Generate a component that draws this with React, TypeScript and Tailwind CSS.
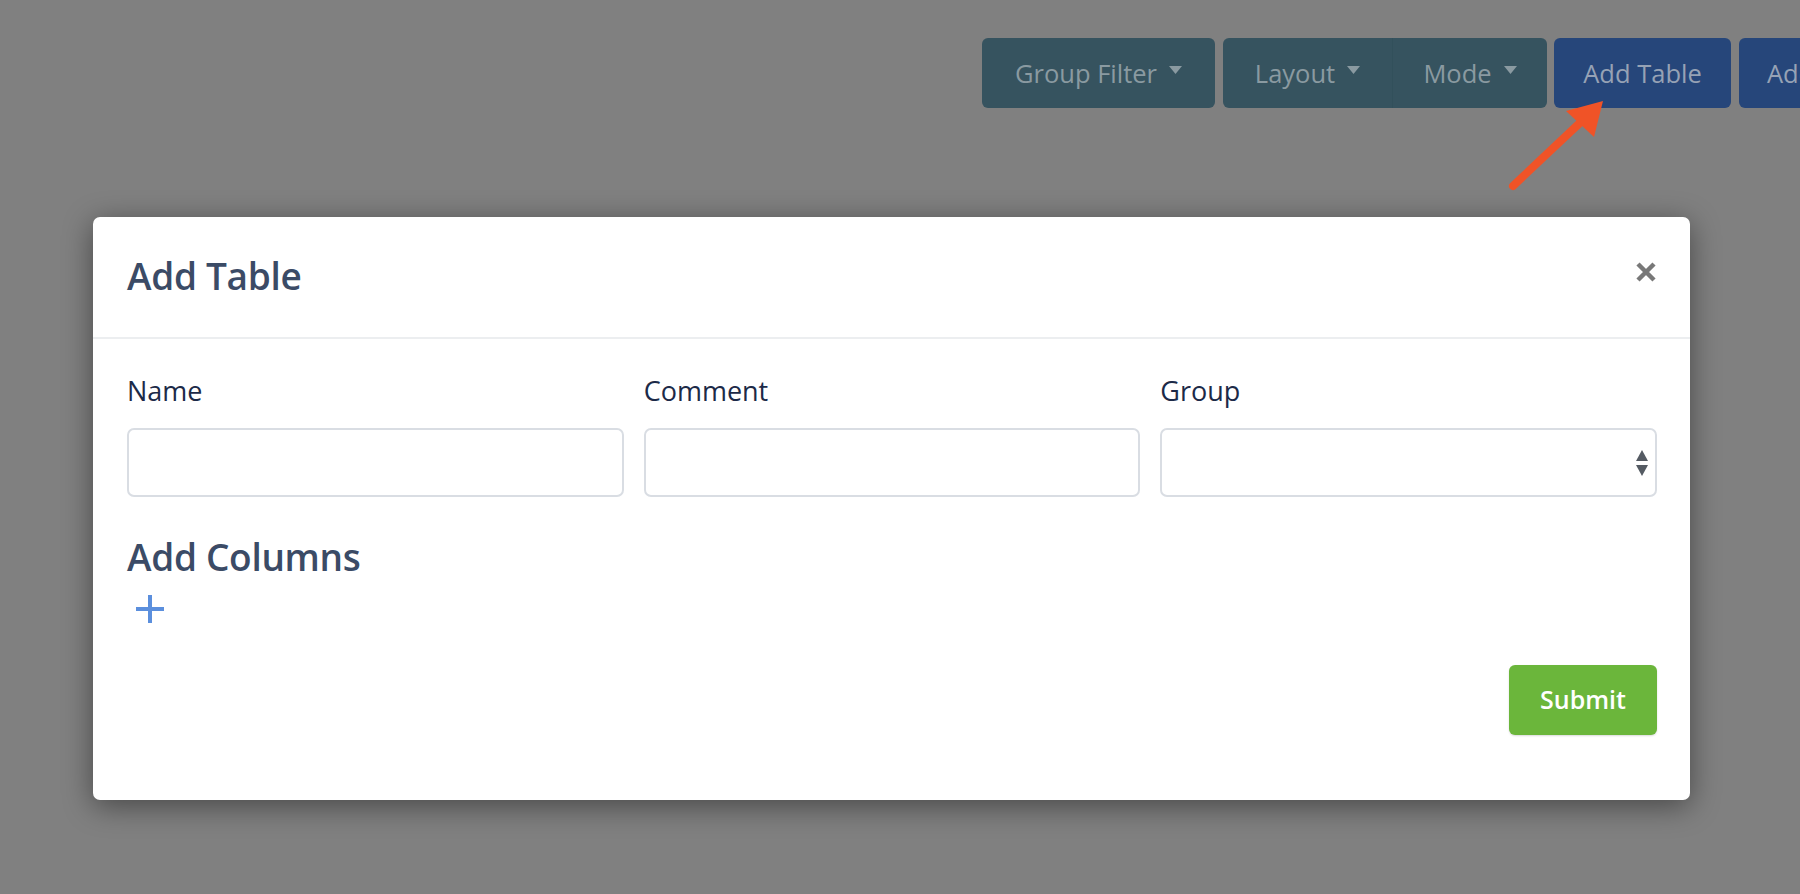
import React from "react";

const Caret = () => (
  <svg className="w-[13px] h-[8px] ml-[12px] mb-[6px]" viewBox="0 0 13 8">
    <path d="M0 0h13L6.5 8z" fill="currentColor" />
  </svg>
);

function TopBar() {
  return (
    <div className="flex h-[108px] pt-[38px] pl-[982px] overflow-hidden whitespace-nowrap" style={{ fontFamily: "'Open Sans', sans-serif" }}>
      <button className="flex items-center justify-center shrink-0 w-[233px] h-[70px] rounded-[6px] bg-[#36535f] text-[#8a9aa1] text-[25.5px]">
        Group Filter
        <Caret />
      </button>
      <div className="flex shrink-0 ml-[8px] h-[70px] rounded-[6px] bg-[#36535f] text-[#8a9aa1] text-[25.5px] overflow-hidden">
        <button className="flex items-center justify-center w-[170px] h-full border-r border-[#32505b]">
          Layout
          <Caret />
        </button>
        <button className="flex items-center justify-center w-[154px] h-full">
          Mode
          <Caret />
        </button>
      </div>
      <button className="flex items-center justify-center shrink-0 ml-[7px] w-[177px] h-[70px] rounded-[6px] bg-[#26467a] text-[#96a2b5] text-[25.5px]">
        Add Table
      </button>
      <button className="flex items-center justify-start shrink-0 ml-[8px] w-[210px] h-[70px] rounded-[6px] bg-[#26467a] text-[#96a2b5] text-[25.5px] pl-[28px]">
        Add Column
      </button>
    </div>
  );
}

function Field({ label, select }: { label: string; select?: boolean }) {
  return (
    <div className="flex flex-col">
      <label className="text-[27px] leading-none h-[27px] text-[#1c2a48]">{label}</label>
      <div className="relative mt-[24px]">
        {select ? (
          <select className="w-full h-[69px] rounded-[7px] border-2 border-[#d9dde3] bg-white appearance-none outline-none" />
        ) : (
          <input className="w-full h-[69px] rounded-[7px] border-2 border-[#d9dde3] bg-white outline-none px-4 text-[24px]" />
        )}
        {select && (
          <svg className="absolute right-[9px] top-[22px] w-[12px] h-[26px] pointer-events-none" viewBox="0 0 12 26">
            <path d="M6 0L12 11H0z" fill="#555b63" />
            <path d="M0 15h12L6 26z" fill="#555b63" />
          </svg>
        )}
      </div>
    </div>
  );
}

export default function App() {
  return (
    <div className="relative w-[1800px] h-[894px] bg-[#808080] overflow-hidden">
      <TopBar />

      {/* arrow pointing to Add Table */}
      <svg className="absolute left-[1500px] top-[95px] w-[115px] h-[105px]" viewBox="1500 95 115 105">
        <line x1="1513" y1="186" x2="1584" y2="119" stroke="#f05327" strokeWidth="8" strokeLinecap="round" />
        <polygon points="1603,101 1566,111 1594,137" fill="#f05327" />
      </svg>

      <div
        className="ml-[93px] mt-[109px] w-[1597px] h-[583px] bg-white rounded-[7px] shadow-[0_6px_30px_rgba(0,0,0,0.45)]"
        style={{ fontFamily: "'Open Sans', sans-serif" }}
      >
        <div className="flex items-center justify-between h-[122px] pl-[34px] pr-[34px] pb-[4px] border-b-2 border-[#eceef0]">
          <h2 className="text-[37px] leading-none font-semibold text-[#3b4b66] tracking-[-0.3px]">Add Table</h2>
          <button className="mb-[6px]">
            <svg className="w-[20px] h-[20px]" viewBox="0 0 20 20">
              <path d="M2 2l16 16M18 2L2 18" stroke="#787878" strokeWidth="4.5" />
            </svg>
          </button>
        </div>

        <div className="px-[34px] pt-[38px] pr-[33px]">
          <div className="grid grid-cols-3 gap-[20px]">
            <Field label="Name" />
            <Field label="Comment" />
            <Field label="Group" select />
          </div>

          <h3 className="mt-[41px] text-[37px] leading-none font-semibold text-[#3b4b66] tracking-[-0.3px]">Add Columns</h3>

          <button className="block mt-[20px] ml-[9px]">
            <svg className="w-[28px] h-[28px]" viewBox="0 0 28 28">
              <path d="M14 0v28M0 14h28" stroke="#5b8fdd" strokeWidth="4" />
            </svg>
          </button>

          <div className="flex justify-end mt-[42px]">
            <button className="w-[148px] h-[70px] rounded-[6px] bg-[#6bb63b] text-white text-[25px] font-semibold shadow-[0_1px_2px_rgba(0,0,0,0.15)]">
              Submit
            </button>
          </div>
        </div>
      </div>
    </div>
  );
}
